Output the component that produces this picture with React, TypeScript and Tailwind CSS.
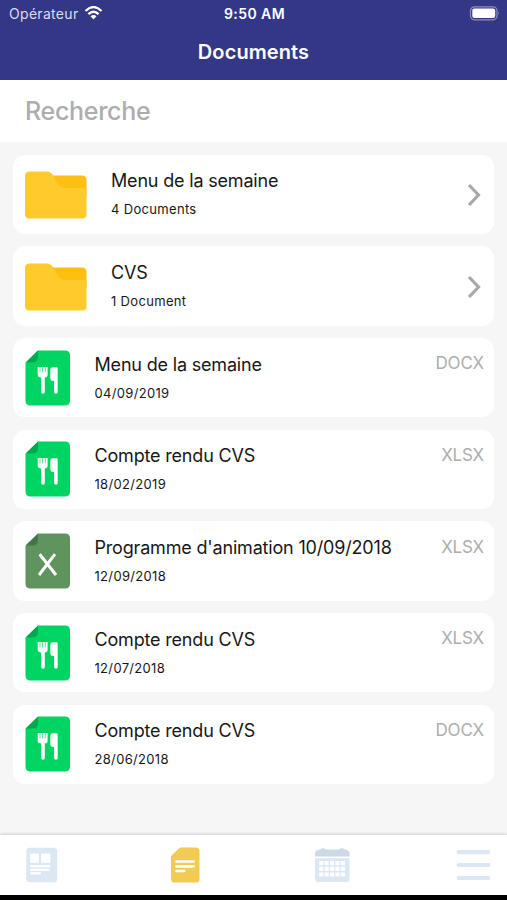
import React from "react";

type FileKind = "folder" | "meal" | "excel";

interface Entry {
  kind: FileKind;
  title: string;
  detail: string;
  format?: string;
}

const entries: Entry[] = [
  { kind: "folder", title: "Menu de la semaine", detail: "4 Documents" },
  { kind: "folder", title: "CVS", detail: "1 Document" },
  { kind: "meal", title: "Menu de la semaine", detail: "04/09/2019", format: "DOCX" },
  { kind: "meal", title: "Compte rendu CVS", detail: "18/02/2019", format: "XLSX" },
  { kind: "excel", title: "Programme d'animation 10/09/2018", detail: "12/09/2018", format: "XLSX" },
  { kind: "meal", title: "Compte rendu CVS", detail: "12/07/2018", format: "XLSX" },
  { kind: "meal", title: "Compte rendu CVS", detail: "28/06/2018", format: "DOCX" },
];

function FolderIcon() {
  return (
    <svg width="62" height="48" viewBox="0 0 62 48" className="mt-[2px] shrink-0">
      <path d="M25 4.500H57Q61.500 4.500 61.500 9V25H25Z" fill="#fdbf12" />
      <path d="M4.500 .5H22.500Q25.500 .5 27.200 3L32 11.500Q35 17 41 17H61.500V43Q61.500 47.500 57 47.500H4.500Q0 47.500 0 43V5Q0 .5 4.500 .5Z" fill="#ffca2c" />
    </svg>
  );
}

function FileIcon({ kind }: { kind: FileKind }) {
  const excel = kind === "excel";
  return (
    <svg width="46" height="56" viewBox="0 0 46 56" className="shrink-0">
      <path
        d="M13 .5H40Q45 .5 45 5.500V50.500Q45 55.500 40 55.500H5.500Q.5 55.500 .5 50.500V13Z"
        fill={excel ? "#5f945e" : "#00d563"}
      />
      <path d="M13 .5V7Q13 12.500 7.500 12.500H.5Z" fill={excel ? "#477448" : "#00a84e"} />
      {excel ? (
        <path d="M14.700 21.200L31 42M30 21.200L14 42" stroke="#fff" strokeWidth="3" fill="none" />
      ) : (
        <g fill="#fff">
          <path d="M12.700 17H14.700V22.500H15.300V17H17.300V22.500H17.900V17H19.900V22.500H20.500V17H22.600V25Q22.600 27.300 19.800 27.500V42Q19.800 43.800 18.100 43.800Q16.200 43.800 16.200 42V27.500Q12.700 27.300 12.700 25Z" />
          <path d="M28 17.300H31.300Q32.700 17.300 32.700 18.700V42Q32.700 43.800 31 43.800Q29.100 43.800 29.100 42V31H28.200Q25.300 31 25.300 28V20Q25.300 17.300 28 17.300Z" />
        </g>
      )}
    </svg>
  );
}

function EntryCard({ entry }: { entry: Entry }) {
  const folder = entry.kind === "folder";
  return (
    <li className="flex h-[79.500px] items-center rounded-[12px] bg-white pr-[10px] pl-3">
      {folder ? <FolderIcon /> : <FileIcon kind={entry.kind} />}
      <div className={folder ? "ml-6 flex-1" : "ml-[23.500px] flex-1"}>
        <div className="mt-[1px] text-[18px] leading-6 tracking-[-0.01em] whitespace-nowrap">{entry.title}</div>
        <div className="mt-[7px] mb-[2px] text-[13px] leading-[18px] tracking-[0.025em]">{entry.detail}</div>
      </div>
      {folder ? (
        <svg width="16" height="24" viewBox="0 0 16 24" className="mt-[2px] mr-[2px]">
          <path d="M3 2L12.500 12L3 22" fill="none" stroke="#a8a8a8" strokeWidth="3.200" />
        </svg>
      ) : (
        <span className="mt-[13.500px] self-start text-[17px] leading-6 tracking-[-0.01em] text-[#adadad]">
          {entry.format}
        </span>
      )}
    </li>
  );
}

function StatusBar() {
  return (
    <div className="grid h-[28px] grid-cols-3 items-center pr-[7px] pl-[9px] text-[14px] leading-[28px]">
      <div className="flex items-center gap-[5px] text-[#dcdcf5]">
        <span className="tracking-[0.022em]">Opérateur</span>
        <svg width="19" height="14" viewBox="0 0 18 14" className="mt-[-2px]">
          <path d="M1 5Q9-2.800 17 5M3.900 8.200Q9 3.200 14.100 8.200" fill="none" stroke="#fff" strokeWidth="2.400" />
          <path d="M6 10.300Q9 7.800 12 10.300L9 13.600Z" fill="#fff" />
        </svg>
      </div>
      <span className="text-center font-semibold tracking-[0.03em] whitespace-nowrap">9:50 AM</span>
      <svg width="31" height="15" viewBox="0 0 31 15" className="mt-[-2px] justify-self-end">
        <rect x="1.500" y=".8" width="26.500" height="13" rx="4" fill="none" stroke="#8e8dbd" strokeWidth="1.200" />
        <rect x="3.300" y="2.600" width="22.900" height="9.400" rx="2" fill="#fff" />
        <path d="M29.300 5.200Q31 7.200 29.300 9.200Z" fill="#8e8dbd" />
      </svg>
    </div>
  );
}

function TabBar() {
  return (
    <nav className="flex h-[60px] items-center bg-white pl-[26px] shadow-[0_-1px_3px_rgba(0,0,0,0.16)]">
      <svg width="32" height="36" viewBox="0 0 32 36">
        <rect x=".2" y=".7" width="31" height="34.500" rx="3.500" fill="#dce7f4" />
        <g fill="#fff">
          <rect x="4" y="6.500" width="9" height="9.500" rx="1.500" />
          <rect x="15" y="6.500" width="9.500" height="9.500" rx="1.500" />
          <rect x="4" y="18" width="20.500" height="2.200" rx="1.100" />
          <rect x="4" y="21.800" width="19.500" height="2.200" rx="1.100" />
          <rect x="4" y="25.300" width="11" height="2.200" rx="1.100" />
        </g>
      </svg>
      <svg width="29" height="36" viewBox="0 0 29 36" className="ml-[112.500px]">
        <path d="M9 .5H25Q28.500 .5 28.500 4V32Q28.500 35.500 25 35.500H3.500Q0 35.500 0 32V9Z" fill="#f2cb55" />
        <path d="M5.500 14.500H22.500M5.500 19.300H22.500M5.500 24H13" stroke="#fff" strokeWidth="2.700" strokeLinecap="round" />
      </svg>
      <svg width="35" height="34" viewBox="0 0 35 34" className="ml-[115.500px]">
        <path d="M0 8.500V5Q1 1.500 5 1.500Q8-1 11 1.500H23.500Q27-1 30 1.500Q33.500 1.500 34.500 5V8.500Z" fill="#cdd9e6" />
        <path d="M0 10.200H34.500V30.500Q34.500 34 31 34H3.500Q0 34 0 30.500Z" fill="#dce7f4" />
        <g fill="#fff">
          {[13, 18.700, 24.400].map((y) =>
            [4.200, 9.600, 15, 20.400, 25.800].map((x) => (
              <rect key={`${x}-${y}`} x={x} y={y} width="4.200" height="4.200" rx=".7" />
            )),
          )}
        </g>
      </svg>
      <svg width="35" height="32" viewBox="0 0 35 32" className="ml-[106px]">
        <path d="M2.700 3.200H32.300M2.700 16H32.300M2.700 29H32.300" stroke="#dce7f4" strokeWidth="4.200" strokeLinecap="round" />
      </svg>
    </nav>
  );
}

export default function App() {
  return (
    <div className="flex h-[900px] w-[507px] flex-col overflow-hidden bg-[#f6f6f6] font-['Inter','Liberation_Sans',sans-serif] text-[#171717]">
      <header className="h-[80px] bg-[#343686] text-white">
        <StatusBar />
        <h1 className="mt-[10px] text-center text-[20px] leading-[28px] font-semibold tracking-[0.005em]">Documents</h1>
      </header>
      <div className="flex h-[62px] items-center bg-white pt-[2px] pl-[25px] text-[25px] font-medium tracking-[-0.012em] text-[#adadad]">
        Recherche
      </div>
      <main className="flex-1 px-[13px] pt-[12.500px]">
        <ul className="flex flex-col gap-[12.200px]">
          {entries.map((entry, index) => (
            <EntryCard key={index} entry={entry} />
          ))}
        </ul>
      </main>
      <TabBar />
      <div className="h-[5px] bg-black" />
    </div>
  );
}
